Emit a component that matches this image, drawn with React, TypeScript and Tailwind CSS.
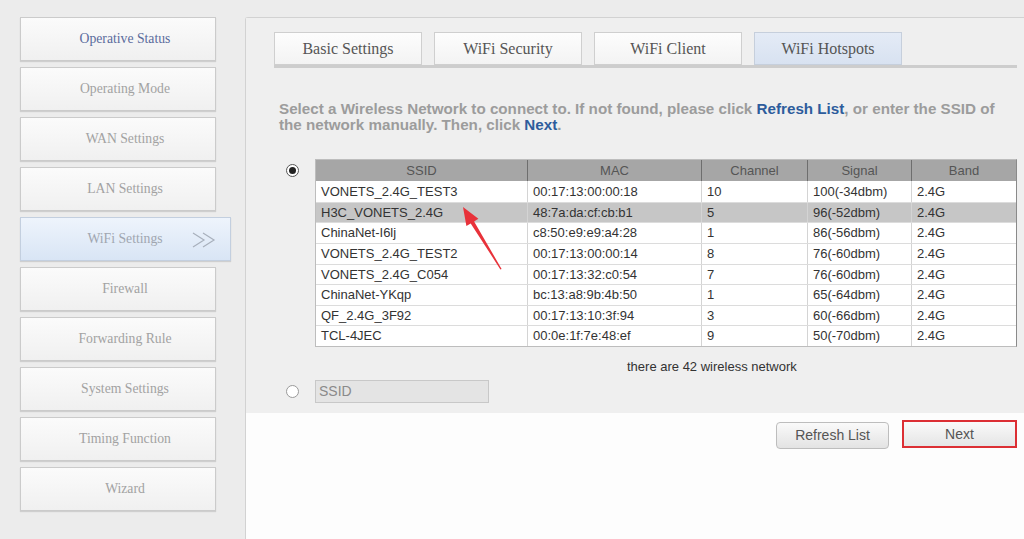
import React from 'react';

const navItems = [
    'Operative Status',
    'Operating Mode',
    'WAN Settings',
    'LAN Settings',
    'WiFi Settings',
    'Firewall',
    'Forwarding Rule',
    'System Settings',
    'Timing Function',
    'Wizard',
];

const tabs = ['Basic Settings', 'WiFi Security', 'WiFi Client', 'WiFi Hotspots'];

const networks = [
    ['VONETS_2.4G_TEST3', '00:17:13:00:00:18', '10', '100(-34dbm)', '2.4G'],
    ['H3C_VONETS_2.4G', '48:7a:da:cf:cb:b1', '5', '96(-52dbm)', '2.4G'],
    ['ChinaNet-I6lj', 'c8:50:e9:e9:a4:28', '1', '86(-56dbm)', '2.4G'],
    ['VONETS_2.4G_TEST2', '00:17:13:00:00:14', '8', '76(-60dbm)', '2.4G'],
    ['VONETS_2.4G_C054', '00:17:13:32:c0:54', '7', '76(-60dbm)', '2.4G'],
    ['ChinaNet-YKqp', 'bc:13:a8:9b:4b:50', '1', '65(-64dbm)', '2.4G'],
    ['QF_2.4G_3F92', '00:17:13:10:3f:94', '3', '60(-66dbm)', '2.4G'],
    ['TCL-4JEC', '00:0e:1f:7e:48:ef', '9', '50(-70dbm)', '2.4G'],
];

const headers = ['SSID', 'MAC', 'Channel', 'Signal', 'Band'];
const colWidths = ['w-[211px]', 'w-[174px]', 'w-[106px]', 'w-[104px]', 'w-[105px]'];

function Radio({ checked }: { checked?: boolean }) {
    return (
        <span
            className={
                'flex h-[13px] w-[13px] items-center justify-center rounded-full border bg-white ' +
                (checked ? 'border-[#555]' : 'border-[#9a9a9a]')
            }
        >
            {checked && <span className="h-[7px] w-[7px] rounded-full bg-[#222]" />}
        </span>
    );
}

function Sidebar() {
    return (
        <aside className="flex w-[245px] shrink-0 flex-col gap-[6px] pt-[17px] pl-[20px] font-['Liberation_Serif',serif] text-[13.7px]">
            {navItems.map((item, i) => {
                const active = item === 'WiFi Settings';
                return (
                    <div
                        key={item}
                        className={
                            'relative flex h-[44px] items-center justify-center border pl-[14px] shadow-[0_1px_1px_rgba(0,0,0,0.12)] ' +
                            (active
                                ? 'w-[211px] border-[#c3cfdf] bg-gradient-to-b from-[#eef4fc] to-[#d9e5f5] pr-[15px] text-[#a0a6b0]'
                                : 'w-[196px] border-[#cbcbcb] bg-gradient-to-b from-[#fbfbfb] to-[#f0f0f0] ' +
                                  (i === 0 ? 'text-[#5a6b9c]' : 'text-[#a2a2a2]'))
                        }
                    >
                        {item}
                        {active && (
                            <svg className="absolute right-[13px] top-[13px]" width="26" height="18" viewBox="0 0 26 18">
                                <path d="M2 2 L13 9 L2 16 M12 2 L23 9 L12 16" fill="none" stroke="#a8b0bc" strokeWidth="1.2" />
                            </svg>
                        )}
                    </div>
                );
            })}
        </aside>
    );
}

function NetworkTable() {
    return (
        <div className="relative border border-[#bdbdbd] border-r-[#8a8a8a] font-['Liberation_Sans',Arial,sans-serif] text-[13px]">
            <div className="flex h-[21px] bg-[#a6a6a6] text-[#555]">
                {headers.map((h, i) => (
                    <div
                        key={h}
                        className={colWidths[i] + ' flex items-center justify-center ' + (i > 0 ? 'border-l border-[#6e6e6e]' : '')}
                    >
                        {h}
                    </div>
                ))}
            </div>
            {networks.map((row, r) => (
                <div
                    key={row[0]}
                    className={
                        'flex h-[20.6px] text-[#333] ' + (r === 1 ? 'bg-[#c6c6c6]' : 'bg-white') + (r > 0 ? ' border-t border-[#dcdcdc]' : '')
                    }
                >
                    {row.map((cell, i) => (
                        <div
                            key={i}
                            className={colWidths[i] + ' flex items-center px-[5px] ' + (i > 0 ? 'border-l border-[#d4d4d4]' : '')}
                        >
                            {cell}
                        </div>
                    ))}
                </div>
            ))}
            <svg className="absolute left-[140px] top-[40px]" width="60" height="80" viewBox="0 0 60 80">
                <polygon
                    points="7,7 22.4,18.7 18.1,21.4 45.6,69 44.4,69.4 14.7,23.4 10.4,26.1"
                    fill="#e8323a"
                />
            </svg>
        </div>
    );
}

export default function App() {
    return (
        <div className="flex h-[539px] w-[1024px] overflow-hidden bg-[#ececec]">
            <Sidebar />
            <main className="mt-[17px] flex flex-1 flex-col rounded-tl-[3px] border-t border-l border-[#d2d2d2]">
                <section className="h-[395px] bg-[#efefef] pt-[14px] pl-[28px]">
                    <div className="flex gap-[12px] font-['Liberation_Serif',serif] text-[16px] text-[#555]">
                        {tabs.map((t) => (
                            <div
                                key={t}
                                className={
                                    'flex h-[33px] w-[148px] items-center justify-center border ' +
                                    (t === 'WiFi Hotspots'
                                        ? 'border-[#c6cfdc] bg-gradient-to-b from-[#e4ebf6] to-[#d8e2f1]'
                                        : 'border-[#cfcfcf] bg-gradient-to-b from-[#fdfdfd] to-[#f3f3f3]')
                                }
                            >
                                {t}
                            </div>
                        ))}
                    </div>
                    <div className="h-[3px] w-[743px] bg-[#cdcdcd]" />

                    <p className="mt-[33px] ml-[5px] w-[735px] font-['Liberation_Sans',Arial,sans-serif] text-[15.2px] leading-[15.6px] font-bold text-[#9c9c9c]">
                        Select a Wireless Network to connect to. If not found, please click{' '}
                        <span className="text-[#2d5c9c]">Refresh List</span>, or enter the SSID of the network manually. Then, click{' '}
                        <span className="text-[#2d5c9c]">Next</span>.
                    </p>

                    <div className="mt-[27px] flex items-start">
                        <div className="flex w-[41px] justify-start pt-[5px] pl-[12px]">
                            <Radio checked />
                        </div>
                        <NetworkTable />
                    </div>

                    <p className="mt-[12px] ml-[353px] font-['Liberation_Sans',Arial,sans-serif] text-[13px] leading-[16px] text-[#333]">
                        there are 42 wireless network
                    </p>

                    <div className="mt-[5px] flex items-center">
                        <div className="flex w-[41px] pl-[12px]">
                            <Radio />
                        </div>
                        <div className="flex h-[23px] w-[174px] items-center border border-[#c8c8c8] bg-[#e4e4e4] px-[3px] font-['Liberation_Sans',Arial,sans-serif] text-[14px] text-[#8a8a8a]">
                            SSID
                        </div>
                    </div>
                </section>

                <section className="flex flex-1 items-start gap-[13px] bg-[#fdfdfd] pt-[7px] pl-[530px] font-['Liberation_Sans',Arial,sans-serif] text-[14px] text-[#555]">
                    <button className="mt-[2px] flex h-[27px] w-[113px] items-center justify-center rounded-[4px] border border-[#bdbdbd] bg-gradient-to-b from-[#fafafa] to-[#e3e3e3]">
                        Refresh List
                    </button>
                    <button className="flex h-[28px] w-[115px] items-center justify-center border-2 border-[#dc2f34] bg-gradient-to-b from-[#fafafa] to-[#e5e5e5]">
                        Next
                    </button>
                </section>
            </main>
        </div>
    );
}
